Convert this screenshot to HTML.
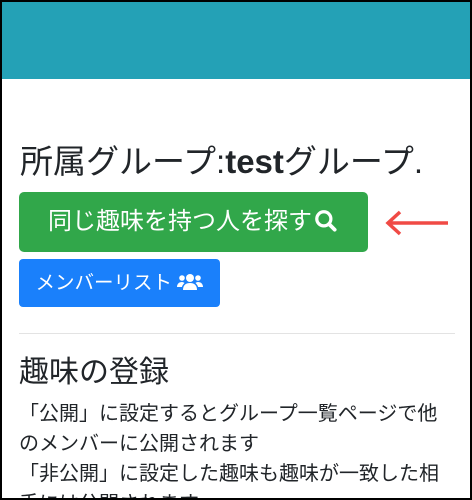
<!DOCTYPE html>
<html><head><meta charset="utf-8"><style>
html,body{margin:0;padding:0;}
body{width:472px;height:500px;overflow:hidden;background:#000;position:relative;font-family:"Liberation Sans","Noto Sans CJK JP",sans-serif;color:#212529;}
.page{position:absolute;left:2px;top:2px;width:468px;height:496px;background:#fff;overflow:hidden;}
.hdr{position:absolute;left:0;top:0;width:468px;height:77px;background:#24a1b6;}
.t{position:absolute;left:18px;top:138px;font-size:33px;white-space:nowrap;width:411px;overflow:hidden;line-height:44px;}
.g{position:absolute;left:17px;top:190px;width:349px;height:60px;background:#31a74a;border-radius:5px;color:#fff;font-size:24px;line-height:60px;text-align:center;white-space:nowrap;}
.b{position:absolute;left:17px;top:257px;width:201px;height:48px;background:#1a80fb;border-radius:4px;color:#fff;font-size:19.5px;line-height:48px;text-align:center;white-space:nowrap;}
.hr{position:absolute;left:17px;top:331px;width:436px;height:1px;background:#e3e3e3;}
.h2{position:absolute;left:17px;top:350px;font-size:30px;line-height:42px;}
.p{position:absolute;left:17px;top:397px;font-size:20px;line-height:30px;width:425px;}
svg{vertical-align:middle;}
</style></head><body><div class="page">
<div class="hdr"></div>
<div class="t">所属グループ:<b>test</b>グループ.</div>
<div class="g">同じ趣味を持つ人を探す<svg width="26" height="26" viewBox="0 0 24 24" style="margin-left:1px;margin-top:-4px"><circle cx="10" cy="10" r="6.5" fill="none" stroke="#fff" stroke-width="3"/><path d="M15 15l5 5" stroke="#fff" stroke-width="3.5" stroke-linecap="round"/></svg></div>
<svg style="position:absolute;left:382px;top:206px" width="66" height="30" viewBox="0 0 66 30"><path d="M64 15H4M16 4L4 15l12 11" fill="none" stroke="#f04a45" stroke-width="3.5"/></svg>
<div class="b">メンバーリスト <svg width="26" height="20" viewBox="0 0 26 20" style="margin-top:-3px"><circle cx="13" cy="6" r="4" fill="#fff"/><circle cx="5" cy="6" r="2.8" fill="#fff"/><circle cx="21" cy="6" r="2.8" fill="#fff"/><path d="M6 18c0-5 3-7 7-7s7 2 7 7z" fill="#fff"/><path d="M0 15c0-3 2-5 5-5 1 0 2 .5 2.5 1C6 12.5 5 14 5 15z M26 15c0-3-2-5-5-5-1 0-2 .5-2.5 1 1.5 1.5 2.5 3 2.5 4z" fill="#fff"/></svg></div>
<div class="hr"></div>
<div class="h2">趣味の登録</div>
<div class="p">「公開」に設定するとグループ一覧ページで他のメンバーに公開されます<br>「非公開」に設定した趣味も趣味が一致した相手には公開されます</div>
</div></body></html>
